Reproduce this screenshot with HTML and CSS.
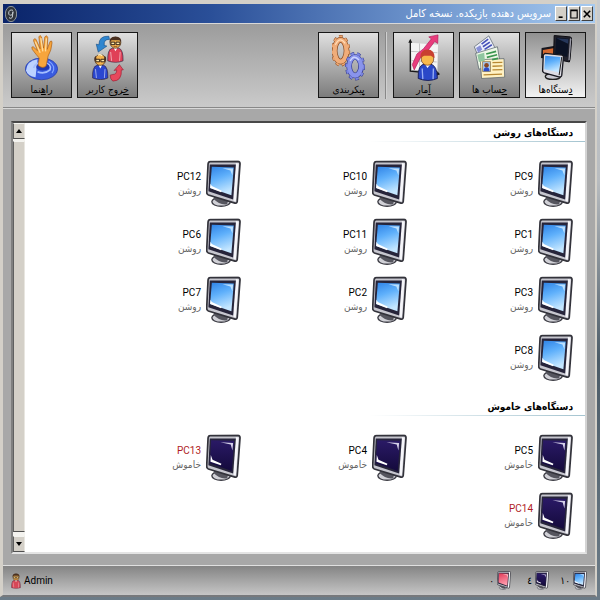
FILE: index.html
```html
<!DOCTYPE html>
<html lang="fa" dir="rtl">
<head>
<meta charset="utf-8">
<title>سرویس دهنده بازیکده</title>
<link rel="stylesheet" href="styles.css">
</head>
<body>
<svg class="defs" aria-hidden="true">
  <defs>
    <linearGradient id="g-blue" x1="0" y1="0" x2=".3" y2="1"><stop offset="0" stop-color="#2f83e6"/><stop offset=".45" stop-color="#5fb0fb"/><stop offset="1" stop-color="#c4e6ff"/></linearGradient>
    <linearGradient id="g-dark" x1="0" y1="0" x2="0" y2="1"><stop offset="0" stop-color="#2a1a66"/><stop offset="1" stop-color="#140a3c"/></linearGradient>
    <linearGradient id="g-red" x1="0" y1="0" x2=".3" y2="1"><stop offset="0" stop-color="#e03a58"/><stop offset="1" stop-color="#ff9aac"/></linearGradient>
    <symbol id="frame" viewBox="0 0 102 138">
      <ellipse cx="44" cy="121" rx="27" ry="13" fill="#d0d0d6" stroke="#3c3c44" stroke-width="4"/>
      <path d="M24 104L64 118L62 128Q40 132 22 112Z" fill="#55555e"/>
      <path d="M12 4L93 3Q100 4 99 12L91 120Q90 127 82 124L7 101Q2 99 2 93L6 11Q7 4 12 4Z" fill="#c6c6ce" stroke="#33333b" stroke-width="5"/>
      <path d="M87 8L95 9L87 120L80 118Z" fill="#f6f6fa"/>
      <path d="M11 12L87 12L79 114L7 90Z" fill="#26243a"/>
    </symbol>
    <symbol id="pc-on" viewBox="0 0 102 138">
      <use href="#frame"/>
      <path d="M17 19L81 21L74 102L12 81Z" fill="url(#g-blue)"/>
      <path d="M48 23L79 24L77 44L71 30Z" fill="#d8efff" opacity=".8"/>
      <path d="M13 68L17 75L46 89L44 93L12 81Z" fill="#fff"/>
    </symbol>
    <symbol id="pc-off" viewBox="0 0 102 138">
      <use href="#frame"/>
      <path d="M15 17L82 19L75 107L11 84Z" fill="url(#g-dark)"/>
      <path d="M42 23L79 25L77 47L72 30Z" fill="#d6d2ea"/>
      <path d="M14 60L19 74L45 86L43 90L13 80Z" fill="#fff"/>
    </symbol>
    <symbol id="pc-red" viewBox="0 0 102 138">
      <use href="#frame"/>
      <path d="M15 17L82 19L75 107L11 84Z" fill="url(#g-red)"/>
      <path d="M42 23L79 25L77 47L72 30Z" fill="#ffd6dc"/>
    </symbol>
    <symbol id="person-body" viewBox="0 0 54 84">
      <path d="M3 78Q1 42 17 38L38 38Q52 43 51 78Q28 88 3 78Z" fill="currentColor" stroke="#30203c" stroke-width="2"/>
      <path d="M12 50L15 78M42 50L40 78" stroke="#fff" stroke-width="3" opacity=".55"/>
      <path d="M22 38L27 48L33 38Z" fill="#fff"/>
      <circle cx="27" cy="21" r="17" fill="#f5b550" stroke="#402818" stroke-width="2"/>
    </symbol>
    <symbol id="person-hair" viewBox="0 0 54 84">
      <use href="#person-body"/>
      <path d="M9 20Q6 2 27 1Q48 2 45 20L40 13L15 13Z" fill="#4a3020"/>
      <path d="M13 19h12v8h-12zM29 19h12v8h-12z" fill="#ffe9a8" stroke="#2c1a12" stroke-width="3"/>
      <path d="M21 33h12" stroke="#7a3010" stroke-width="2"/>
    </symbol>
    <symbol id="person-bald" viewBox="0 0 54 84">
      <use href="#person-body"/>
      <path d="M9 24Q7 10 14 9L15 22ZM45 24Q47 10 40 9L39 22Z" fill="#4a3020"/>
      <path d="M13 19h12v8h-12zM29 19h12v8h-12z" fill="#ffe9a8" stroke="#2c1a12" stroke-width="3"/>
      <path d="M20 6Q27 2 33 8" stroke="#fff3c8" stroke-width="4" fill="none"/>
    </symbol>
  </defs>
</svg>

<div class="window">
  <header class="titlebar">
    <div class="controls">
      <button type="button" aria-label="بستن"><svg viewBox="0 0 10 12"><path d="M1 2L9 10M9 2L1 10" stroke="#000" stroke-width="2"/></svg></button>
      <button type="button" aria-label="بزرگ‌نمایی"><svg viewBox="0 0 10 12"><path d="M1 1h8v10h-8zM1 2h8" stroke="#000" stroke-width="1.4" fill="none"/></svg></button>
      <button type="button" aria-label="کوچک‌نمایی"><svg viewBox="0 0 10 12"><path d="M2 10h5" stroke="#000" stroke-width="2"/></svg></button>
    </div>
    <h1>سرویس دهنده بازیکده. نسخه کامل</h1>
    <svg class="logo" viewBox="0 0 36 48" aria-hidden="true"><ellipse cx="18" cy="24" rx="17" ry="23" fill="#30353c" stroke="#8e969c" stroke-width="3"/><path d="M24 13Q12 9 11 21Q11 31 22 26L24 17L22 34Q18 40 12 35" fill="none" stroke="#c5cbd0" stroke-width="3"/></svg>
  </header>

  <nav class="toolbar">
    <button type="button" class="tool active">
      <svg viewBox="0 0 100 144">
        <path d="M8 42L54 34L52 78L6 72Z" fill="#16161e"/><path d="M12 48L48 42L47 66L12 64Z" fill="#d46a32"/>
        <path d="M46 4L94 8Q100 9 99 16L94 76L92 84L44 74Z" fill="#22222c" stroke="#0a0a10" stroke-width="3"/><path d="M52 10L90 14L86 68L49 62Z" fill="#0b1224"/><path d="M53 12L89 15L88 29Z" fill="#26375a"/><path d="M94 12L98 14L93 78L89 79Z" fill="#9a9aa6"/>
        <ellipse cx="42" cy="128" rx="23" ry="9" fill="#c8c8d0" stroke="#222" stroke-width="4"/>
        <path d="M18 58L70 63Q75 65 74 70L69 124Q68 131 60 129L16 117Q10 115 11 109L13 63Z" fill="#dcdce4" stroke="#17171f" stroke-width="4"/><path d="M19 65L65 69L61 116L16 106Z" fill="url(#g-blue)"/><path d="M69 69L61 124" stroke="#222" stroke-width="3"/>
      </svg>
      <span><u>د</u>ستگاه‌ها</span>
    </button>
    <button type="button" class="tool">
      <svg viewBox="0 0 100 144">
        <g stroke="#4a5560" stroke-width="2"><path d="M4 38L48 5L70 48L22 82Z" fill="#edf0fa"/><path d="M8 58L74 38L82 86L18 106Z" fill="#edf7e6"/><path d="M22 77L94 74L96 130L26 134Z" fill="#fff2c4"/></g>
        <path d="M26 30L46 15M30 38L51 24M35 46L57 32" stroke="#4450b8" stroke-width="5"/>
        <path d="M40 60L70 52M42 70L73 62M58 77L76 73" stroke="#3c9650" stroke-width="5"/>
        <path d="M13 62L34 56L36 80L18 84Z" fill="#90c6a0"/><path d="M9 42L22 33L28 46L16 56Z" fill="#8890d8"/>
        <path d="M29 83h24v30h-24z" fill="#a8c8f0" stroke="#8a6a30" stroke-width="2"/><path d="M32 112Q32 100 41 100Q50 100 50 112Z" fill="#2c4cc8"/><circle cx="41" cy="94" r="7" fill="#8a4824"/>
        <path d="M59 86L89 85M59 97L89 96M59 108L89 107M32 123L88 121" stroke="#b88832" stroke-width="4"/>
      </svg>
      <span><u>ح</u>ساب ها</span>
    </button>
    <button type="button" class="tool">
      <svg viewBox="0 0 100 144">
        <path d="M12 26L94 32L92 112L14 108Z" fill="#f5f5f5"/><path d="M12 52L92 56M14 80L90 84M38 28L38 110M66 30L64 110" stroke="#aaa" stroke-width="2"/>
        <path d="M10 20V112L96 120" stroke="#181818" stroke-width="4" fill="none"/><path d="M4 26L10 14L16 26ZM92 112L100 121L90 126Z" fill="#181818"/>
        <path d="M16 92L22 108L40 72L58 56L84 22L93 28L94 2L66 8L74 14L50 44L30 60Z" fill="#e83c7c" stroke="#b01c58" stroke-width="2"/>
        <path d="M34 134Q32 92 54 90H70Q92 94 92 134Q64 146 34 134Z" fill="#2a48c8" stroke="#1a205c" stroke-width="3"/><path d="M46 104L48 136M80 104L79 136" stroke="#9ab0f4" stroke-width="4"/><path d="M54 90L62 102L72 90Z" fill="#fff"/>
        <circle cx="62" cy="75" r="19" fill="#f8b94c" stroke="#60301c" stroke-width="2"/><path d="M40 72Q40 46 62 46Q84 46 84 72L72 65H52Z" fill="#c84030"/>
      </svg>
      <span><u>آ</u>مار</span>
    </button>
    <i class="divider"></i>
    <button type="button" class="tool">
      <svg viewBox="0 0 100 144">
        <g fill="none"><ellipse cx="26" cy="50" rx="25" ry="44" stroke="#8a4a20" stroke-width="8" stroke-dasharray="11 9"/><ellipse cx="26" cy="50" rx="18" ry="33" stroke="#8a4a20" stroke-width="17"/><ellipse cx="26" cy="50" rx="25" ry="44" stroke="#eda671" stroke-width="5" stroke-dasharray="10 10"/><ellipse cx="26" cy="50" rx="18" ry="33" stroke="#f0ad7a" stroke-width="13"/><path d="M10 32Q24 4 40 28" stroke="#ffdcb8" stroke-width="4"/></g>
        <g fill="none"><ellipse cx="70" cy="97" rx="26" ry="39" stroke="#30388c" stroke-width="9" stroke-dasharray="11 9"/><ellipse cx="70" cy="97" rx="18" ry="28" stroke="#30388c" stroke-width="17"/><ellipse cx="70" cy="97" rx="26" ry="39" stroke="#7c86e0" stroke-width="6" stroke-dasharray="10 10"/><ellipse cx="70" cy="97" rx="18" ry="28" stroke="#8994ec" stroke-width="13"/><path d="M55 81Q66 60 82 78" stroke="#ccd4ff" stroke-width="4"/></g>
      </svg>
      <span><u>پ</u>یکربندی</span>
    </button>
    <i class="spacer"></i>
    <button type="button" class="tool">
      <svg viewBox="0 0 100 144">
        <path d="M22 54L16 30L24 32Q24 4 54 6L56 16Q38 14 40 34L48 36Z" fill="#2f86d0" stroke="#175088" stroke-width="2"/>
        <path d="M58 124L66 122Q78 122 78 108L70 110L86 92L98 108L92 108Q94 142 66 142Q58 136 58 124Z" fill="#e8485c" stroke="#982034" stroke-width="2"/>
        <use href="#person-hair" x="48" y="4" width="52" height="84" color="#e04058"/>
        <use href="#person-bald" x="2" y="56" width="52" height="84" color="#2c48d0"/>
      </svg>
      <span><u>خ</u>روج کاربر</span>
    </button>
    <button type="button" class="tool">
      <svg viewBox="0 0 100 144">
        <ellipse cx="50" cy="105" rx="49" ry="33" fill="#3a5ce0" stroke="#2338a4" stroke-width="2"/><path d="M3 110Q6 80 38 76L32 130Q8 128 3 110Z" fill="#bcd2ff"/><path d="M26 102Q32 84 56 86Q82 90 76 108Q60 122 38 114" fill="none" stroke="#a4beff" stroke-width="5"/><ellipse cx="54" cy="99" rx="20" ry="11" fill="#2038b0"/><path d="M72 82Q96 96 82 118" fill="none" stroke="#7fa2ff" stroke-width="4"/>
        <path d="M40 94L43 72Q34 62 22 46Q18 36 25 38L38 50L26 20Q26 11 33 15L46 44L42 8Q45 0 50 8L56 42L60 8Q66 0 69 10L67 46L76 22Q82 17 82 26Q80 50 70 66L64 96Q52 106 40 94Z" fill="#f7a53c" stroke="#a85c14" stroke-width="2"/><path d="M31 22L46 56M48 12L54 52M65 12L62 52" stroke="#ffdc9c" stroke-width="4"/>
      </svg>
      <span>را<u>ه</u>نما</span>
    </button>
  </nav>

  <main class="workspace">
    <div class="panel">
      <div class="list">
        <section>
          <h2>دستگاه‌های روشن</h2>
          <ul class="machines">
            <li><svg><use href="#pc-on"/></svg><p><b>PC9</b><span>روشن</span></p></li>
            <li><svg><use href="#pc-on"/></svg><p><b>PC10</b><span>روشن</span></p></li>
            <li><svg><use href="#pc-on"/></svg><p><b>PC12</b><span>روشن</span></p></li>
            <li><svg><use href="#pc-on"/></svg><p><b>PC1</b><span>روشن</span></p></li>
            <li><svg><use href="#pc-on"/></svg><p><b>PC11</b><span>روشن</span></p></li>
            <li><svg><use href="#pc-on"/></svg><p><b>PC6</b><span>روشن</span></p></li>
            <li><svg><use href="#pc-on"/></svg><p><b>PC3</b><span>روشن</span></p></li>
            <li><svg><use href="#pc-on"/></svg><p><b>PC2</b><span>روشن</span></p></li>
            <li><svg><use href="#pc-on"/></svg><p><b>PC7</b><span>روشن</span></p></li>
            <li><svg><use href="#pc-on"/></svg><p><b>PC8</b><span>روشن</span></p></li>
          </ul>
        </section>
        <section>
          <h2>دستگاه‌های خاموش</h2>
          <ul class="machines">
            <li><svg><use href="#pc-off"/></svg><p><b>PC5</b><span>خاموش</span></p></li>
            <li><svg><use href="#pc-off"/></svg><p><b>PC4</b><span>خاموش</span></p></li>
            <li class="alert"><svg><use href="#pc-off"/></svg><p><b>PC13</b><span>خاموش</span></p></li>
            <li class="alert"><svg><use href="#pc-off"/></svg><p><b>PC14</b><span>خاموش</span></p></li>
          </ul>
        </section>
      </div>
      <div class="scrollbar">
        <button type="button" aria-label="بالا"><svg viewBox="0 0 8 6"><path d="M4 1L7 5H1Z"/></svg></button>
        <i class="thumb"></i>
        <button type="button" aria-label="پایین"><svg viewBox="0 0 8 6"><path d="M4 5L7 1H1Z"/></svg></button>
      </div>
    </div>
  </main>

  <footer class="status">
    <span class="count"><svg><use href="#pc-on"/></svg>۱۰</span>
    <span class="count"><svg><use href="#pc-off"/></svg>٤</span>
    <span class="count"><svg><use href="#pc-red"/></svg>۰</span>
    <span class="user">Admin<svg><use href="#person-hair" color="#d84858"/></svg></span>
  </footer>
</div>
</body>
</html>
```
FILE: styles.css
```css
* { box-sizing: border-box; }

body {
  margin: 0;
  min-height: 100vh;
  display: flex;
  padding: 0 3px 3px 0;
  direction: rtl;
  background: linear-gradient(#c8ccd0, #b8bcc0 30%, #4c5c68 60%, #6c7c88);
  font: 10px/14px Roboto, "DejaVu Sans Condensed", "DejaVu Sans", sans-serif;
  color: #000;
}

.defs { position: absolute; width: 0; height: 0; }
button { padding: 0; font: inherit; color: inherit; }
svg { display: block; }

.window {
  flex: 1;
  display: flex;
  flex-direction: column;
  border: 3px solid #d4d0c8;
  border-top-width: 4px;
  border-bottom: 2px solid #77797c;
  border-right-width: 2px;
  background: #a8a8a8;
}

.titlebar {
  display: flex;
  align-items: center;
  height: 20px;
  padding: 0 2px;
  background: linear-gradient(to right, #0a246a, #2a4f98 35%, #6c93cc 70%, #a6caf0);
  border-bottom: 1px solid #d8d8d8;
}
.titlebar h1 {
  flex: 1;
  margin: 0 4px;
  font: 11px/16px "DejaVu Sans Condensed", "DejaVu Sans", sans-serif;
  color: #fff;
}
.logo { width: 12px; height: 16px; }
.controls { display: flex; gap: 1px; }
.controls button {
  width: 12px;
  height: 15px;
  border: 1px solid;
  border-color: #fff #404040 #404040 #fff;
  background: #d4d0c8;
}
.controls svg { width: 8px; height: 10px; margin: auto; }

.toolbar {
  display: flex;
  gap: 5px;
  padding: 8px 9px 8px 8px;
  height: 84px;
  background: linear-gradient(#9c9c9c, #cacaca);
  border-bottom: 1px solid #888;
  box-shadow: 0 1px #d8d8d8;
}
.tool {
  display: flex;
  flex-direction: column;
  align-items: center;
  justify-content: space-between;
  width: 61px;
  height: 66px;
  padding-top: 1px;
  border: 1px solid #181818;
  background: linear-gradient(#e0e0e0, #7c7c7c);
  font: 10px/14px "DejaVu Sans Condensed", "DejaVu Sans", sans-serif;
}
.tool.active { background: linear-gradient(#909090, #f2f2f2); }
.tool svg { width: 33px; height: 48px; }
.divider { width: 1px; margin: 0 2px 0 1px; background: #888; box-shadow: 1px 0 #d0d0d0; }
.spacer { flex: 1; }

.workspace { flex: 1; display: flex; padding: 13px 8px 11px; }
.panel {
  flex: 1;
  display: flex;
  border: 2px solid;
  border-color: #484848 #d4d4d4 #e4e4e4 #808080;
  background: #fff;
}
.list { flex: 1; }
.scrollbar {
  width: 12px;
  display: flex;
  flex-direction: column;
  background: #f4f3ef;
}
.scrollbar button, .thumb {
  border: 1px solid;
  border-color: #f4f4f0 #e8e6e0 #505050 #606060;
  background: #d4d0c8;
}
.scrollbar button { height: 16px; }
.scrollbar svg { width: 8px; height: 6px; margin: auto; }
.thumb { flex: 1; margin: 2px 0 4px; }

h2 {
  margin: 0;
  height: 19px;
  padding: 2px 12px 0 0;
  font: bold 10px/16px "DejaVu Sans Condensed", "DejaVu Sans", sans-serif;
  background: linear-gradient(to left, #a4c4d0, #fff) right bottom / 216px 1px no-repeat;
}
.machines {
  display: grid;
  grid-template-columns: repeat(3, 166px);
  grid-auto-rows: 58px;
  margin: 0;
  padding: 18px 12px 5px 0;
  list-style: none;
}
section + section .machines { padding-bottom: 0; }
.machines li { display: flex; gap: 5px; }
.machines svg { width: 35px; height: 48px; }
.machines p { margin: 0; padding-top: 10px; }
.machines b, .machines span { display: block; }
.machines b { font-weight: normal; text-align: right; }
.machines span { color: #666; font: 10px/14px "DejaVu Sans Condensed", "DejaVu Sans", sans-serif; }
.machines .alert b { color: #b01c24; }

.status {
  display: flex;
  align-items: center;
  height: 30px;
  padding: 0 8px;
  gap: 11px;
  border-top: 1px solid #e0e0e0;
  background: linear-gradient(#848484, #c6c6c6);
}
.count {
  display: flex;
  align-items: center;
  gap: 3px;
  min-width: 27px;
  font-family: "DejaVu Sans Condensed", "DejaVu Sans", sans-serif;
}
.count svg { width: 14px; height: 19px; }
.user { display: flex; align-items: center; gap: 3px; margin-right: auto; }
.user svg { width: 10px; height: 16px; }
```
